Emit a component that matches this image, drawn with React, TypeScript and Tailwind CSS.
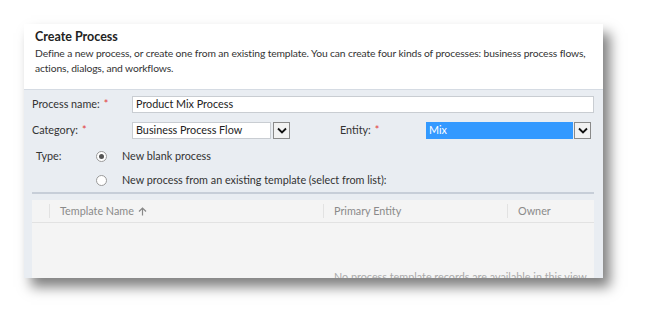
import React from "react";

const font = { fontFamily: 'Lato, "Open Sans", sans-serif' };

function Star() {
  return <span className="ml-1 text-[#e23b3b]">*</span>;
}

function Chevron() {
  return (
    <div className="flex h-[17px] w-[17px] items-center justify-center border border-[#8a8a8a] bg-[#f2f2f2]">
      <svg width="10" height="7" viewBox="0 0 10 7">
        <path d="M1 1.5 L5 5.5 L9 1.5" fill="none" stroke="#111" strokeWidth="1.8" />
      </svg>
    </div>
  );
}

function Radio({ checked }: { checked?: boolean }) {
  return (
    <div className="flex h-[11px] w-[11px] items-center justify-center rounded-full border border-[#9a9a9a] bg-white">
      {checked && <div className="h-[5px] w-[5px] rounded-full bg-[#555]" />}
    </div>
  );
}

export default function App() {
  return (
    <div className="h-[326px] w-[650px] overflow-hidden bg-white pl-[24px] pt-[24px]" style={font}>
      <div className="flex h-[254px] w-[579px] flex-col overflow-hidden bg-white shadow-[7px_9px_12px_rgba(0,0,0,0.5)]">
        <div className="h-[66px] shrink-0 border-b border-[#d5dbe3] pl-[11px] pr-[4px] pt-[4px]">
          <div className="text-[12.5px] font-bold leading-[18px] text-[#222]">Create Process</div>
          <div className="text-[10.3px] leading-[15px] tracking-[-0.12px] text-[#333]">
            Define a new process, or create one from an existing template. You can create four kinds of processes: business process flows, actions, dialogs, and workflows.
          </div>
        </div>
        <div className="flex flex-1 flex-col bg-[#e9edf2] pl-[8px] pr-[9px] pt-[5px] text-[10.8px] text-[#333]">
          <div className="flex h-[19px] items-center">
            <div className="w-[100px]">Process name:<Star /></div>
            <div className="flex h-[17px] flex-1 items-center border border-[#c9cdd2] bg-white pl-[3px] text-[#222]">Product Mix Process</div>
          </div>
          <div className="mt-[7px] flex h-[19px] items-center">
            <div className="w-[100px]">Category:<Star /></div>
            <div className="flex h-[17px] w-[139px] items-center border border-[#c9cdd2] bg-white pl-[3px] text-[#222]">Business Process Flow</div>
            <div className="ml-[2px]"><Chevron /></div>
            <div className="ml-[50px] w-[86px]">Entity:<Star /></div>
            <div className="flex h-[17px] w-[147px] items-center bg-[#3399ff] pl-[3px] text-white">Mix</div>
            <div className="ml-[1px]"><Chevron /></div>
          </div>
          <div className="mt-[7px] flex h-[19px] items-center">
            <div className="w-[64px] pl-[4px]">Type:</div>
            <Radio checked />
            <div className="ml-[15px]">New blank process</div>
          </div>
          <div className="mt-[5px] flex h-[19px] items-center">
            <div className="w-[64px]" />
            <Radio />
            <div className="ml-[15px]">New process from an existing template (select from list):</div>
          </div>
          <div className="mt-[2px] h-[2px] bg-[#c7ced8]" />
          <div className="mt-[6px] flex flex-1 flex-col bg-[#f4f4f4]">
            <div className="flex h-[23px] items-center border-b border-[#e2e2e2] text-[#8a8a8a]">
              <div className="h-[14px] w-[18px] border-r border-[#e2e2e2]" />
              <div className="flex h-[14px] w-[274px] items-center border-r border-[#e2e2e2] pl-[10px]">
                Template Name
                <svg className="ml-[4px]" width="9" height="9" viewBox="0 0 9 9">
                  <path d="M4.5 8.5 V1.5 M1 4.5 L4.5 1 L8 4.5" fill="none" stroke="#888" strokeWidth="1.2" />
                </svg>
              </div>
              <div className="flex h-[14px] w-[184px] items-center border-r border-[#e2e2e2] pl-[10px]">Primary Entity</div>
              <div className="pl-[10px]">Owner</div>
            </div>
            <div className="pl-[302px] pt-[46px] text-[#aaa]">No process template records are available in this view.</div>
          </div>
        </div>
      </div>
    </div>
  );
}
